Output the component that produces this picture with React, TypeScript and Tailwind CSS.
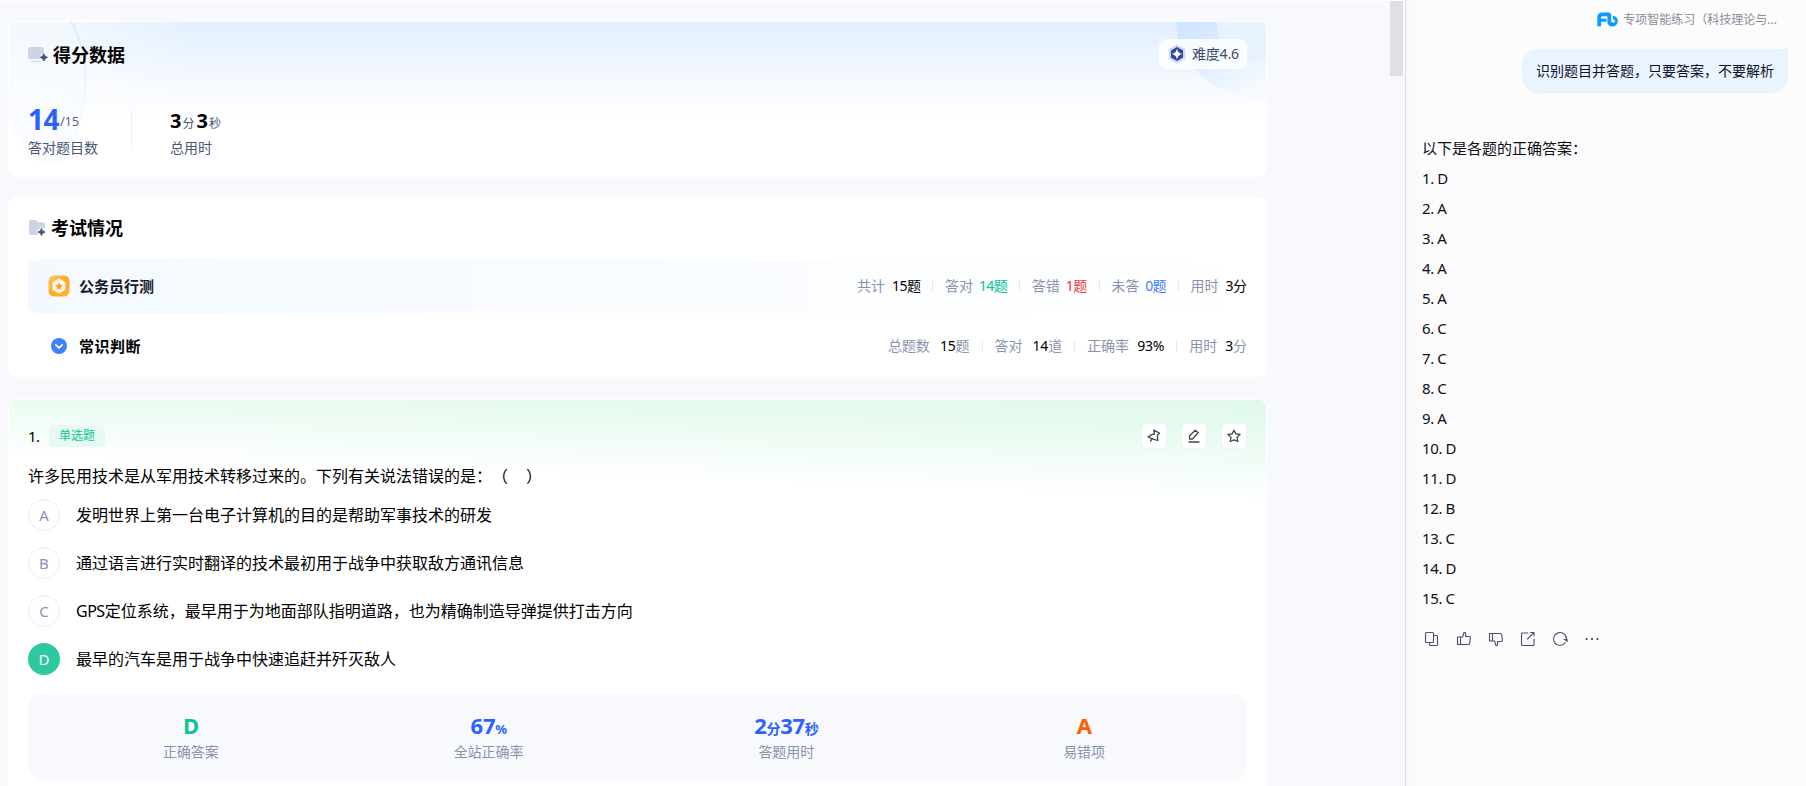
import React from "react";
import clsx from "clsx";

type Stat = { label: string; value: string; unit?: string; tone?: string; unitTone?: string; gap: string };

const examStats: Stat[] = [
  { label: "共计", value: "15", unit: "题", tone: "text-black", gap: "ml-[7px]" },
  { label: "答对", value: "14", unit: "题", tone: "text-[#00c796]", gap: "ml-[6px]" },
  { label: "答错", value: "1", unit: "题", tone: "text-[#f5333b]", gap: "ml-[6px]" },
  { label: "未答", value: "0", unit: "题", tone: "text-[#3d7bff]", gap: "ml-[6px]" },
  { label: "用时", value: "3", unit: "分", tone: "text-black", gap: "ml-[7px]" }
];

const sectionStats: Stat[] = [
  { label: "总题数", value: "15", unit: "题", unitTone: "text-[#8a93ad]", gap: "ml-2.5" },
  { label: "答对", value: "14", unit: "道", unitTone: "text-[#8a93ad]", gap: "ml-2.5" },
  { label: "正确率", value: "93%", gap: "ml-2" },
  { label: "用时", value: "3", unit: "分", unitTone: "text-[#8a93ad]", gap: "ml-2" }
];

const options = [
  { key: "A", text: "发明世界上第一台电子计算机的目的是帮助军事技术的研发" },
  { key: "B", text: "通过语言进行实时翻译的技术最初用于战争中获取敌方通讯信息" },
  { key: "C", text: "GPS定位系统，最早用于为地面部队指明道路，也为精确制造导弹提供打击方向" },
  { key: "D", text: "最早的汽车是用于战争中快速追赶并歼灭敌人", correct: true }
];

const answers = ["D", "A", "A", "A", "A", "C", "C", "C", "A", "D", "D", "B", "C", "D", "C"];

function Sparkle({ x, y }: { x: number; y: number }) {
  return (
    <path
      d="M0-3.600Q.6-.6 3.600 0Q.6.6 0 3.600Q-.6.6-3.600 0Q-.6-.6 0-3.600Z"
      transform={`translate(${x} ${y})`}
      fill="#4a5578"
      stroke="#4a5578"
      strokeWidth="0.900"
    />
  );
}

function ScreenIcon() {
  return (
    <svg width="20" height="18" viewBox="0 0 20 18" className="shrink-0">
      <rect x="0" y="1" width="16" height="12" rx="2.500" fill="#cdd4e6" />
      <rect x="3" y="14.500" width="10" height="2" rx="1" fill="#dbe0ee" />
      <circle cx="15.800" cy="11.400" r="4" fill="#e9f3ff" />
      <Sparkle x={15.8} y={11.4} />
    </svg>
  );
}

function FolderIcon() {
  return (
    <svg width="18" height="18" viewBox="0 0 18 18" className="shrink-0">
      <path
        d="M1 3.500C1 2.100 1.900 1 3.200 1h4c1 0 1.400.3 1.900 1.100l.4.7c.3.4.6.5 1.200.5h4c1.400 0 2.300.9 2.300 2.300v8.200c0 1.400-.9 2.200-2.300 2.200H3.200C1.900 16 1 15.200 1 13.800Z"
        fill="#cdd4e6"
      />
      <circle cx="13.500" cy="13" r="4.300" fill="#fff" />
      <Sparkle x={13.5} y={13} />
    </svg>
  );
}

function DifficultyIcon() {
  return (
    <svg width="20" height="22" viewBox="0 0 20 22" className="shrink-0">
      <path d="M10 1.500 18.200 6v10L10 20.500 1.800 16V6Z" fill="#cbd9ff" />
      <path d="M10 4 16 7.400v7.200L10 18 4 14.600V7.400Z" fill="#2c4498" />
      <path d="M10 5.500Q10.800 10.200 15.200 11Q10.800 11.800 10 16.500Q9.200 11.800 4.800 11Q9.200 10.200 10 5.500Z" fill="#fff" />
    </svg>
  );
}

function StarBadgeIcon() {
  return (
    <svg width="22" height="22" viewBox="0 0 22 22" className="shrink-0">
      <defs>
        <linearGradient id="star-badge" x1="0" y1="0" x2="1" y2="1">
          <stop offset="0" stopColor="#ffc566" />
          <stop offset="0.500" stopColor="#ffa826" />
          <stop offset="1" stopColor="#ffb732" />
        </linearGradient>
      </defs>
      <rect x="0.500" y="0.500" width="21" height="21" rx="5.500" fill="url(#star-badge)" />
      <path
        d="M11 4.800 16.200 7.800v6.400L11 17.200 5.800 14.200V7.800Z"
        fill="#fff8ea"
        stroke="#fff8ea"
        strokeWidth="2.500"
        strokeLinejoin="round"
      />
      <path
        d="m11 7.400 1.200 2.400 2.700.4-2 1.900.5 2.700-2.400-1.300-2.400 1.300.5-2.700-2-1.900 2.700-.4Z"
        fill="#ffa01f"
      />
    </svg>
  );
}

function ChevronBadgeIcon() {
  return (
    <svg width="16" height="16" viewBox="0 0 16 16" className="shrink-0">
      <circle cx="8" cy="8" r="8" fill="#4080ff" />
      <path d="m4.800 6.800 3.200 3 3.200-3" fill="none" stroke="#fff" strokeWidth="1.700" strokeLinecap="round" strokeLinejoin="round" />
    </svg>
  );
}

function BrandIcon() {
  return (
    <svg width="21" height="15" viewBox="0 0 21 15" fill="none" className="shrink-0">
      <path d="M2.200 14.200V5.500C2.200 3.500 3.300 2.300 5.300 2.300H11" stroke="#0b9bff" strokeWidth="3.800" />
      <path d="M3 8.200h6.500" stroke="#0b9bff" strokeWidth="3" />
      <path
        d="M10 .4h1.500c1.800 0 2.700.9 2.700 2.600v5.800c0 1.300.7 2 1.900 2 1.200 0 1.900-.7 1.900-1.700 0-1.100-.8-1.700-2.200-1.700V4c3 0 5 2 5 5s-2.100 5.400-5 5.400c-3.200 0-5.400-2-5.400-5V5Z"
        fill="#0b9bff"
      />
    </svg>
  );
}

function ToolButton({ children }: { children: React.ReactNode }) {
  return (
    <button type="button" className="flex size-[26px] items-center justify-center rounded-[5px] border border-[#eef1fb] bg-white">
      <svg
        width="14"
        height="14"
        viewBox="0 0 14 14"
        fill="none"
        stroke="#3c464f"
        strokeWidth="1.300"
        strokeLinejoin="round"
        strokeLinecap="round"
      >
        {children}
      </svg>
    </button>
  );
}

function ActionIcon({ children }: { children: React.ReactNode }) {
  return (
    <button type="button" className="flex size-4 items-center justify-center">
      <svg
        width="16"
        height="16"
        viewBox="0 0 16 16"
        fill="none"
        stroke="#4c4d6b"
        strokeWidth="1.100"
        strokeLinejoin="round"
        strokeLinecap="round"
      >
        {children}
      </svg>
    </button>
  );
}

function StatRow({ stats, tight }: { stats: Stat[]; tight?: boolean }) {
  return (
    <div className="flex items-center text-sm leading-5">
      {stats.map((stat, i) => (
        <React.Fragment key={stat.label}>
          {i > 0 && <span className={clsx("h-2.5 w-px bg-[#e3e6ef]", tight ? "mx-[11.5px]" : "mx-3")} />}
          <span className="text-[#8a93ad]">{stat.label}</span>
          <span className={clsx(stat.gap, stat.tone ?? "text-black")}>
            <span className={tight ? "tracking-[-0.6px]" : "tracking-[-0.2px]"}>{stat.value}</span>
            {stat.unit && <span className={stat.unitTone}>{stat.unit}</span>}
          </span>
        </React.Fragment>
      ))}
    </div>
  );
}

function ScoreCard() {
  return (
    <section className="relative h-[156px] overflow-hidden rounded-lg border border-white bg-[linear-gradient(180deg,#e2efff_0%,#e7f2ff_12%,#f6f9ff_42%,#ffffff_64%)]">
      <svg className="absolute inset-0" width="1258" height="154" viewBox="0 0 1258 154" fill="none">
        <defs>
          <linearGradient id="left-fade" x1="0" y1="0" x2="1" y2="0">
            <stop offset="0" stopColor="#fff" stopOpacity="0.700" />
            <stop offset="1" stopColor="#fff" stopOpacity="0" />
          </linearGradient>
          <linearGradient id="ring" x1="0" y1="0" x2="0.700" y2="1">
            <stop offset="0" stopColor="#cde3ff" />
            <stop offset="0.400" stopColor="#dbebff" />
            <stop offset="1" stopColor="#f6faff" />
          </linearGradient>
          <linearGradient id="leaf" x1="0" y1="0" x2="0" y2="1">
            <stop offset="0" stopColor="#d9ebff" />
            <stop offset="0.600" stopColor="#f3f8ff" />
            <stop offset="1" stopColor="#fbfdff" />
          </linearGradient>
        </defs>
        <rect width="190" height="154" fill="url(#left-fade)" />
        <path d="M0 0H62C82 34 84 92 52 142L30 140C12 128 4 110 0 96Z" fill="#f3f8ff" fillOpacity="0.450" />
        <path d="M62 0C82 34 84 92 52 142" stroke="url(#leaf)" strokeWidth="2" />
        <path d="M0 8C32 24 62 58 72 88" stroke="#eef5ff" strokeWidth="1" />
        <path d="M1167 0a78 78 0 0 0 91 75V34a38 38 0 0 1-50-34Z" fill="url(#ring)" />
        <path d="M1182 44a78 78 0 0 0 50 30" stroke="#fff" strokeWidth="1" />
        <path d="M1208 0a38 38 0 0 0 50 37V0Z" fill="#e8f2ff" />
      </svg>

      <div className="relative px-[19px] pt-[13px]">
        <div className="flex h-10 items-center justify-between">
          <h2 className="flex items-center gap-[5px] text-lg font-bold text-black">
            <ScreenIcon />
            得分数据
          </h2>
          <div className="mb-0.5 flex h-[30px] w-[88px] items-center gap-1 rounded-lg bg-white/80 pl-2 text-sm text-[#3c4a70]">
            <DifficultyIcon />
            <span className="ml-px tracking-[-0.2px]">难度4.6</span>
          </div>
        </div>

        <div className="mt-[27px] flex">
          <div className="w-[103px]">
            <p className="flex h-8 pt-px leading-8">
              <span className="text-[28px] font-bold tracking-[-0.5px] text-[#2b62ff]">14</span>
              <span className="ml-px pt-0.5 text-[13px] tracking-[-0.3px] text-[#5a678c]">/15</span>
            </p>
            <p className="mt-1 text-sm leading-5 text-[#4a5578]">答对题目数</p>
          </div>
          <div className="mt-2 h-9 w-px bg-[#eaeef6]" />
          <div className="ml-[38px]">
            <p className="flex h-8 items-baseline pt-[3px] leading-8">
              <span className="text-xl font-bold leading-8 text-black">3</span>
              <span className="ml-px text-xs text-[#4a5578]">分</span>
              <span className="ml-0.5 text-xl font-bold leading-8 text-black">3</span>
              <span className="ml-px text-xs text-[#4a5578]">秒</span>
            </p>
            <p className="mt-1 text-sm leading-5 text-[#4a5578]">总用时</p>
          </div>
        </div>
      </div>
    </section>
  );
}

function ExamCard() {
  return (
    <section className="mt-5 h-[180px] rounded-lg bg-white px-5 pt-[17px]">
      <h2 className="flex h-7 items-center gap-[5px] text-lg font-bold text-black">
        <FolderIcon />
        考试情况
      </h2>
      <div className="mt-[17px] flex h-[54px] items-center justify-between rounded-lg bg-linear-to-r from-[#f3f9ff] to-white pl-5">
        <div className="flex items-center gap-[9px] text-[15px] font-bold text-[#14182b]">
          <StarBadgeIcon />
          公务员行测
        </div>
        <StatRow stats={examStats} tight />
      </div>
      <div className="mt-[22px] flex h-[22px] items-center justify-between pl-[23px]">
        <div className="flex items-center gap-3 text-[15px] font-bold tracking-[0.5px] text-black">
          <ChevronBadgeIcon />
          常识判断
        </div>
        <StatRow stats={sectionStats} />
      </div>
    </section>
  );
}

function ResultCell({ children, label, tone }: { children: React.ReactNode; label: string; tone: string }) {
  return (
    <div className="flex flex-1 flex-col items-center">
      <p className={clsx("h-[30px] text-[22px] font-bold leading-[30px] tracking-[-0.3px]", tone)}>{children}</p>
      <p className="mt-0.5 text-sm leading-5 text-[#8a93ad]">{label}</p>
    </div>
  );
}

function QuestionCard() {
  return (
    <section className="mt-[22px] h-[420px] rounded-lg border border-white bg-[linear-gradient(182deg,#dff9e9_0px,#ebfbf2_44px,#ffffff_102px)] px-[19px] pt-[23px]">
      <div className="flex h-[26px] items-center justify-between">
        <div className="flex items-center">
          <span className="w-[21px] text-[15px] tracking-[-0.5px] text-black">1.</span>
          <span className="flex h-[22px] w-14 items-center justify-center rounded bg-[#e6faf1] text-xs text-[#0cc596]">单选题</span>
        </div>
        <div className="flex gap-3.5">
          <ToolButton>
            <path d="m6.800 1 5.800 3.200-2.300 2 .5 5.300-4-1.200L1 8l3.800-2.400L7.500 5Z" />
            <path d="m5 9.700-1.400 2.400" />
          </ToolButton>
          <ToolButton>
            <path d="M2.500 10V7L8.300 1.200l2.800 2.600L5.500 10Z" />
            <path d="M2 13h10" />
          </ToolButton>
          <ToolButton>
            <path d="m7 1.200 1.900 3.700 4.100.6-3 2.900.8 4.100L7 10.800l-3.800 1.700.8-4.100-3-2.900 4.100-.6Z" />
          </ToolButton>
        </div>
      </div>

      <p className="mt-[15px] h-6 text-base leading-6 text-black [text-spacing-trim:space-all]">
        许多民用技术是从军用技术转移过来的。下列有关说法错误的是：（<span className="tracking-[2px]">　</span>）
      </p>

      <div className="mt-[11px] flex flex-col gap-4">
        {options.map((option) => (
          <div key={option.key} className="flex h-8 items-center">
            <span
              className={clsx(
                "flex size-8 items-center justify-center rounded-full text-[15px]",
                option.correct ? "bg-[#2dc8a0] text-white" : "border border-[#e9edf8] bg-white text-[#8a93ad]"
              )}
            >
              {option.key}
            </span>
            <span className="ml-4 text-base leading-6 text-black">
              {option.text.startsWith("GPS") ? (
                <>
                  <span className="tracking-[-0.5px]">GPS</span>
                  {option.text.slice(3)}
                </>
              ) : (
                option.text
              )}
            </span>
          </div>
        ))}
      </div>

      <div className="mt-[18px] flex h-[88px] rounded-2xl bg-[#f7f9fd] px-3.5 pt-[17px]">
        <ResultCell label="正确答案" tone="text-[#0cc596]">D</ResultCell>
        <ResultCell label="全站正确率" tone="text-[#2b62ff]">
          67<span className="text-[13px]">%</span>
        </ResultCell>
        <ResultCell label="答题用时" tone="text-[#2b62ff]">
          2<span className="text-sm">分</span>37<span className="text-sm">秒</span>
        </ResultCell>
        <ResultCell label="易错项" tone="text-[#ff5e00]">A</ResultCell>
      </div>
    </section>
  );
}

function ChatPanel() {
  return (
    <aside className="flex flex-1 flex-col border-l border-[#dfdfe3] bg-linear-to-r from-[#f8f8f8] to-[#fcfcfc] to-5% pl-4 pr-[18px]">
      <div className="mt-2.5 flex h-5 items-center justify-end gap-[5px] pr-[11px] text-xs text-[#8b8b99]">
        <span className="mb-0.5">
          <BrandIcon />
        </span>
        <span>专项智能练习（科技理论与...</span>
      </div>
      <div className="mt-[19px] flex h-11 items-center self-end rounded-2xl rounded-tr-none bg-[#eaf4ff] px-3.5 text-sm text-[#0d0f2c]">
        识别题目并答题，只要答案，不要解析
      </div>
      <div className="mt-10 text-[15px] leading-[30px] text-[#0e0e18]">
        <p>以下是各题的正确答案：</p>
        {answers.map((answer, i) => (
          <p key={i} className="tracking-[-0.4px]">
            {i + 1}. {answer}
          </p>
        ))}
      </div>
      <div className="mt-[18px] flex gap-4 pl-0.5">
        <ActionIcon>
          <path d="M2.500 1.500h6c.6 0 1 .4 1 1v8c0 .6-.4 1-1 1h-6c-.6 0-1-.4-1-1v-8c0-.6.4-1 1-1Z" />
          <path d="M10 4.500h2.500c.6 0 1 .4 1 1v8c0 .6-.4 1-1 1h-6c-.6 0-1-.4-1-1V12" />
        </ActionIcon>
        <ActionIcon>
          <path d="M1.500 6h3v7.500h-3ZM4.500 6h2l1.600-4.700c1.300 0 1.800.9 1.600 2L9.500 5.500h3.600c.8 0 1.400.7 1.300 1.500l-.7 5.300c-.2.700-.700 1.200-1.400 1.200H4.500" />
        </ActionIcon>
        <ActionIcon>
          <path d="M1.500 2.500h3V10h-3ZM4.500 10h2l1.600 4.700c1.300 0 1.800-.9 1.600-2L9.500 10.500h3.600c.8 0 1.400-.7 1.300-1.500l-.7-5.300c-.2-.700-.700-1.200-1.400-1.200H4.500" />
        </ActionIcon>
        <ActionIcon>
          <path d="M8 2H2.500c-.6 0-1 .4-1 1v10.500c0 .6.4 1 1 1H13c.6 0 1-.4 1-1V8M10.500 1.500H14V5M13.800 1.700 7.500 8" />
        </ActionIcon>
        <ActionIcon>
          <path d="M13.300 11.800A6.500 6.500 0 1 1 14.500 8" />
          <path d="M11 8h4.600v3.200Z" fill="#4c4d6b" stroke="none" />
        </ActionIcon>
        <ActionIcon>
          <path d="M2.500 8h.01M8 8h.01M13.500 8h.01" strokeWidth="1.800" strokeLinecap="square" />
        </ActionIcon>
      </div>
    </aside>
  );
}

export default function App() {
  return (
    <div className="flex h-[786px] w-[1806px] overflow-hidden bg-[#f7f9fd] font-['Noto_Sans','Noto_Sans_CJK_SC',sans-serif]">
      <main className="flex h-full w-[1405px] justify-between border-t border-white">
        <div className="w-[1267px] pl-2 pt-5">
          <ScoreCard />
          <ExamCard />
          <QuestionCard />
        </div>
        <div className="mr-0.5 h-[75px] w-[13px] bg-[#dfdfe8]" />
      </main>
      <ChatPanel />
    </div>
  );
}
